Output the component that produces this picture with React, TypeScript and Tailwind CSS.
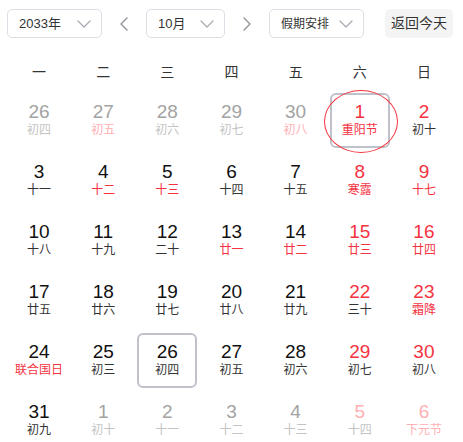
import React from "react";
import { ChevronLeft, ChevronRight } from "lucide-react";

type Day = {
  n: string;
  l: string;
  nc: string;
  lc: string;
  box?: boolean;
  ring?: boolean;
};

const BLACK = "text-[#111111]";
const DARK = "text-[#333333]";
const RED = "text-[#f5333f]";
const GRAY = "text-[#a3a3a3]";
const LGRAY = "text-[#c4c4c4]";
const PINK = "text-[#ffb0b5]";

const days: Day[] = [
  { n: "26", l: "初四", nc: GRAY, lc: LGRAY },
  { n: "27", l: "初五", nc: GRAY, lc: PINK },
  { n: "28", l: "初六", nc: GRAY, lc: LGRAY },
  { n: "29", l: "初七", nc: GRAY, lc: LGRAY },
  { n: "30", l: "初八", nc: GRAY, lc: PINK },
  { n: "1", l: "重阳节", nc: RED, lc: RED, box: true, ring: true },
  { n: "2", l: "初十", nc: RED, lc: DARK },

  { n: "3", l: "十一", nc: BLACK, lc: DARK },
  { n: "4", l: "十二", nc: BLACK, lc: RED },
  { n: "5", l: "十三", nc: BLACK, lc: RED },
  { n: "6", l: "十四", nc: BLACK, lc: DARK },
  { n: "7", l: "十五", nc: BLACK, lc: DARK },
  { n: "8", l: "寒露", nc: RED, lc: RED },
  { n: "9", l: "十七", nc: RED, lc: RED },

  { n: "10", l: "十八", nc: BLACK, lc: DARK },
  { n: "11", l: "十九", nc: BLACK, lc: DARK },
  { n: "12", l: "二十", nc: BLACK, lc: DARK },
  { n: "13", l: "廿一", nc: BLACK, lc: RED },
  { n: "14", l: "廿二", nc: BLACK, lc: RED },
  { n: "15", l: "廿三", nc: RED, lc: RED },
  { n: "16", l: "廿四", nc: RED, lc: RED },

  { n: "17", l: "廿五", nc: BLACK, lc: DARK },
  { n: "18", l: "廿六", nc: BLACK, lc: DARK },
  { n: "19", l: "廿七", nc: BLACK, lc: DARK },
  { n: "20", l: "廿八", nc: BLACK, lc: DARK },
  { n: "21", l: "廿九", nc: BLACK, lc: DARK },
  { n: "22", l: "三十", nc: RED, lc: DARK },
  { n: "23", l: "霜降", nc: RED, lc: RED },

  { n: "24", l: "联合国日", nc: BLACK, lc: RED },
  { n: "25", l: "初三", nc: BLACK, lc: DARK },
  { n: "26", l: "初四", nc: BLACK, lc: DARK, box: true },
  { n: "27", l: "初五", nc: BLACK, lc: DARK },
  { n: "28", l: "初六", nc: BLACK, lc: DARK },
  { n: "29", l: "初七", nc: RED, lc: DARK },
  { n: "30", l: "初八", nc: RED, lc: DARK },

  { n: "31", l: "初九", nc: BLACK, lc: DARK },
  { n: "1", l: "初十", nc: GRAY, lc: LGRAY },
  { n: "2", l: "十一", nc: GRAY, lc: LGRAY },
  { n: "3", l: "十二", nc: GRAY, lc: LGRAY },
  { n: "4", l: "十三", nc: GRAY, lc: LGRAY },
  { n: "5", l: "十四", nc: PINK, lc: LGRAY },
  { n: "6", l: "下元节", nc: PINK, lc: PINK },
];

const weekdays = ["一", "二", "三", "四", "五", "六", "日"];

function Caret() {
  return (
    <svg width="14" height="8" viewBox="0 0 14 8" fill="none">
      <path d="M1 1l6 6 6-6" stroke="#a8abb2" strokeWidth="1.3" strokeLinecap="round" strokeLinejoin="round" />
    </svg>
  );
}

function Select({ label, w, size }: { label: string; w: string; size: string }) {
  return (
    <div
      className={`${w} h-[29px] flex items-center justify-between pl-[11px] pr-[10px] border border-[#dcdfe6] rounded-[5px] bg-white text-[#333333]`}
    >
      <span className={size}>{label}</span>
      <Caret />
    </div>
  );
}

export default function App() {
  return (
    <div
      className="w-[463px] h-[442px] overflow-hidden bg-white"
      style={{ fontFamily: '"Liberation Sans", "Noto Sans CJK SC", sans-serif' }}
    >
      <div className="flex items-center pt-[9px] pl-[7px] h-[38px]">
        <Select label="2033年" w="w-[95px]" size="text-[13px]" />
        <div className="w-[44px] flex justify-center text-[#909399]">
          <ChevronLeft size={24} strokeWidth={1.4} />
        </div>
        <Select label="10月" w="w-[79px]" size="text-[13px]" />
        <div className="w-[44px] flex justify-center text-[#909399]">
          <ChevronRight size={24} strokeWidth={1.4} />
        </div>
        <Select label="假期安排" w="w-[95px]" size="text-[12px]" />
        <div className="ml-[21px] w-[68px] h-[29px] flex items-center justify-center rounded-[5px] bg-[#f4f4f5] text-[14px] text-[#333333]">
          返回今天
        </div>
      </div>

      <div className="mt-[16px] px-[7px] grid grid-cols-7 h-[36px] items-center">
        {weekdays.map((w) => (
          <div key={w} className="text-center text-[14px] text-[#333333]">
            {w}
          </div>
        ))}
      </div>

      <div className="px-[7px] grid grid-cols-7">
        {days.map((d, i) => (
          <div key={i} className="relative h-[60px] flex items-center justify-center">
            <div
              className={`w-[60px] h-[55px] flex flex-col items-center justify-center rounded-[6px] border-2 ${
                d.box ? "border-[#bfc2cb]" : "border-transparent"
              }`}
            >
              <div className={`text-[19px] leading-[21px] ${d.nc}`}>{d.n}</div>
              <div className={`text-[12px] leading-[17px] ${d.lc}`}>{d.l}</div>
            </div>
            {d.ring && (
              <div className="absolute left-[-4px] top-[0px] w-[74px] h-[63px] rounded-[50%] border border-[#f5333f] pointer-events-none" />
            )}
          </div>
        ))}
      </div>
    </div>
  );
}
